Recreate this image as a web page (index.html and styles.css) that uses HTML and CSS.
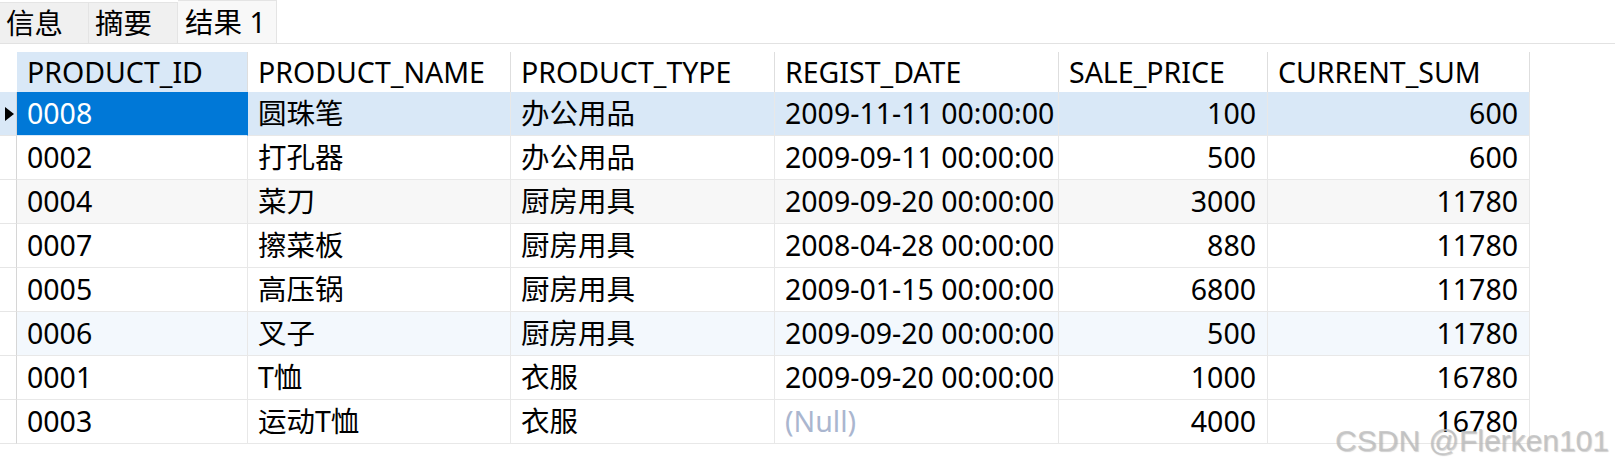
FILE: index.html
```html
<!DOCTYPE html>
<html lang="zh-CN">
<head>
<meta charset="utf-8">
<title>结果 1</title>
<link rel="stylesheet" href="styles.css">
</head>
<body>
<div class="page">
  <div class="tabs">
    <div class="tab">信息</div>
    <div class="tab">摘要</div>
    <div class="tab active">结果 1</div>
    <div class="tab-fill"></div>
  </div>
  <div class="grid">
    <div class="row head">
      <div class="ind"></div>
      <div class="cell sel-col">PRODUCT_ID</div>
      <div class="cell">PRODUCT_NAME</div>
      <div class="cell">PRODUCT_TYPE</div>
      <div class="cell">REGIST_DATE</div>
      <div class="cell">SALE_PRICE</div>
      <div class="cell">CURRENT_SUM</div>
    </div>
    <div class="row current">
      <div class="ind"><span class="tri"></span></div>
      <div class="cell focus">0008</div>
      <div class="cell">圆珠笔</div>
      <div class="cell">办公用品</div>
      <div class="cell">2009-11-11 00:00:00</div>
      <div class="cell num">100</div>
      <div class="cell num">600</div>
    </div>
    <div class="row">
      <div class="ind"></div>
      <div class="cell">0002</div>
      <div class="cell">打孔器</div>
      <div class="cell">办公用品</div>
      <div class="cell">2009-09-11 00:00:00</div>
      <div class="cell num">500</div>
      <div class="cell num">600</div>
    </div>
    <div class="row gray">
      <div class="ind"></div>
      <div class="cell">0004</div>
      <div class="cell">菜刀</div>
      <div class="cell">厨房用具</div>
      <div class="cell">2009-09-20 00:00:00</div>
      <div class="cell num">3000</div>
      <div class="cell num">11780</div>
    </div>
    <div class="row">
      <div class="ind"></div>
      <div class="cell">0007</div>
      <div class="cell">擦菜板</div>
      <div class="cell">厨房用具</div>
      <div class="cell">2008-04-28 00:00:00</div>
      <div class="cell num">880</div>
      <div class="cell num">11780</div>
    </div>
    <div class="row">
      <div class="ind"></div>
      <div class="cell">0005</div>
      <div class="cell">高压锅</div>
      <div class="cell">厨房用具</div>
      <div class="cell">2009-01-15 00:00:00</div>
      <div class="cell num">6800</div>
      <div class="cell num">11780</div>
    </div>
    <div class="row tint">
      <div class="ind"></div>
      <div class="cell">0006</div>
      <div class="cell">叉子</div>
      <div class="cell">厨房用具</div>
      <div class="cell">2009-09-20 00:00:00</div>
      <div class="cell num">500</div>
      <div class="cell num">11780</div>
    </div>
    <div class="row">
      <div class="ind"></div>
      <div class="cell">0001</div>
      <div class="cell">T恤</div>
      <div class="cell">衣服</div>
      <div class="cell">2009-09-20 00:00:00</div>
      <div class="cell num">1000</div>
      <div class="cell num">16780</div>
    </div>
    <div class="row">
      <div class="ind"></div>
      <div class="cell">0003</div>
      <div class="cell">运动T恤</div>
      <div class="cell">衣服</div>
      <div class="cell null">(Null)</div>
      <div class="cell num">4000</div>
      <div class="cell num">16780</div>
    </div>
  </div>
  <div class="watermark">CSDN @Flerken101</div>
</div>
</body>
</html>
```

FILE: styles.css
```css
html, body {
  margin: 0;
  padding: 0;
  background: #ffffff;
}
.page {
  position: relative;
  width: 1615px;
  height: 472px;
  overflow: hidden;
  font-family: "Noto Sans", "Noto Sans CJK SC", sans-serif;
  font-size: 28.5px;
  color: #000000;
}
.tabs {
  display: flex;
  align-items: flex-end;
  height: 43px;
  border-bottom: 1px solid #e2e2e2;
}
.tab {
  box-sizing: border-box;
  height: 41px;
  min-width: 89px;
  padding: 0 10px 0 6px;
  display: flex;
  align-items: center;
  background: #f0f0f0;
  border: 1px solid #e4e4e4;
  border-bottom: none;
  border-left: none;
  white-space: nowrap;
  line-height: 1;
}
.tab.active {
  height: 43px;
  background: #f8f8f8;
  padding: 0 10px 0 7px;
}
.tab-fill {
  flex: 1;
}
.grid {
  margin-top: 8px;
  width: 1530px;
}
.row {
  display: grid;
  grid-template-columns: 17px 231px 263px 264px 284px 209px 262px;
  height: 44px;
}
.row.head {
  height: 40px;
}
.ind {
  box-sizing: border-box;
  border-right: 1px solid #d6d6d6;
  border-bottom: 1px solid #e6e6e6;
  display: flex;
  align-items: center;
  padding-left: 5px;
}
.head .ind {
  border: none;
}
.cell {
  box-sizing: border-box;
  border-right: 1px solid #e8e8e8;
  border-bottom: 1px solid #e8e8e8;
  padding: 0 5px 0 10px;
  display: flex;
  align-items: center;
  white-space: nowrap;
  overflow: hidden;
  line-height: 1;
}
.head .cell {
  border-right: 1px solid #dedede;
  border-bottom: none;
  padding-top: 1px;
}
.head .cell.sel-col {
  background: #d9e8f7;
}
.cell.num {
  justify-content: flex-end;
  padding: 0 11px 0 10px;
}
.cell.null {
  color: #aab6cf;
}
.current .cell,
.current .ind {
  background: #d9e8f7;
}
.current .cell.focus {
  background: #0078d7;
  color: #ffffff;
  border-right-color: #0078d7;
  border-bottom-color: #d9e8f7;
}
.gray .cell {
  background: #f7f7f7;
}
.tint .cell {
  background: #f3f8fd;
}
.tri {
  width: 0;
  height: 0;
  border-top: 7.5px solid transparent;
  border-bottom: 7.5px solid transparent;
  border-left: 9px solid #000000;
}
.watermark {
  position: absolute;
  right: 6px;
  top: 424px;
  font-family: "Liberation Sans", Arial, sans-serif;
  font-size: 30px;
  color: rgba(190, 190, 190, 0.8);
  text-shadow: 1px 1px 1px rgba(120, 120, 120, 0.35);
  white-space: nowrap;
}
```
